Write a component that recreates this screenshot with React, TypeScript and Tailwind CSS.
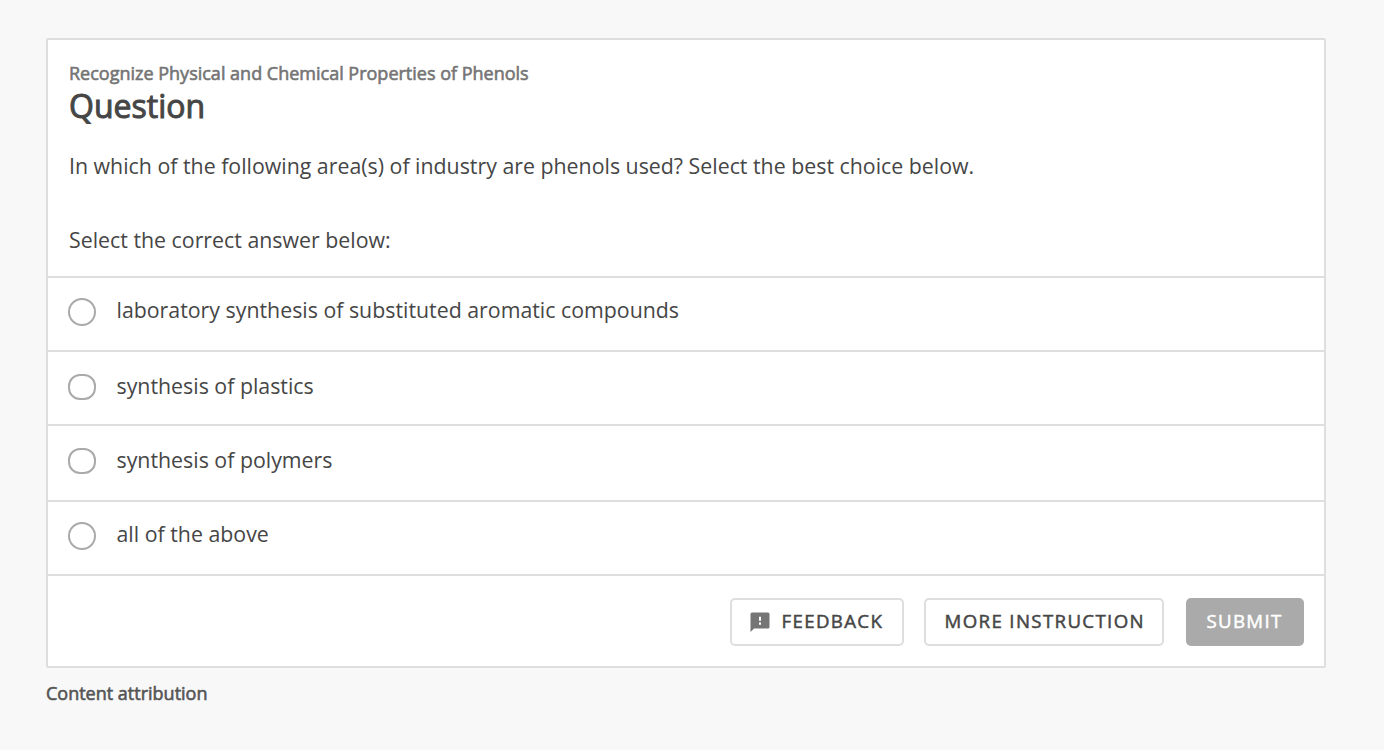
const answers = [
  { text: 'laboratory synthesis of substituted aromatic compounds', row: 'h-[74px] pt-5', dot: 'h-7 rounded-full' },
  { text: 'synthesis of plastics', row: 'h-[74px] pt-[22px]', dot: 'h-[26px] rounded-[12px]' },
  { text: 'synthesis of polymers', row: 'h-[76px] pt-[22px]', dot: 'h-[26px] rounded-[12px]' },
  { text: 'all of the above', row: 'h-[74px] pt-5', dot: 'h-7 rounded-full' },
];

export default function App() {
  return (
    <div className="min-h-screen bg-[#f8f8f8] px-[46px] pt-[38px] font-['Open_Sans',sans-serif] text-[#464646]">
      <main className="flex h-[630px] w-[1280px] flex-col rounded-[2px] border-2 border-[#dedede] bg-white">
        <header className="h-[236px] shrink-0 px-[21px] pt-5">
          <p className="h-[26px] text-[18px] leading-[26px] text-[#757575] [-webkit-text-stroke:0.6px_#757575]">Recognize Physical and Chemical Properties of Phenols</p>
          <h1 className="h-10 text-[32px] leading-10 [-webkit-text-stroke:1px_#464646]">Question</h1>
          <p className="mt-6 h-8 text-[21.33px] leading-8">In which of the following area(s) of industry are phenols used? Select the best choice below.</p>
          <p className="mt-[42px] h-8 text-[21.33px] leading-8">Select the correct answer below:</p>
        </header>
        {answers.map((a) => (
          <label key={a.text} className={`flex shrink-0 items-start border-t-2 border-[#dedede] pl-5 ${a.row}`}>
            <span className={`w-7 shrink-0 border-2 border-[#aaa] ${a.dot}`} />
            <span className="-mt-px ml-[20.5px] text-[21.33px] leading-[26px]">{a.text}</span>
          </label>
        ))}
        <footer className="flex flex-1 justify-end border-t-2 border-[#dedede] pr-5 pt-[22px]">
          <button className="flex h-12 w-[174px] items-center rounded-[5px] border-2 border-[#dedede] pl-[18px] text-[18.67px] leading-7 tracking-[1.35px] [-webkit-text-stroke:0.5px_#464646]">
            <svg width="20" height="20" viewBox="0 0 20 20" className="mr-[11.5px] shrink-0">
              <path fill="#757575" d="M2 .5h16a1.5 1.5 0 0 1 1.5 1.5v13a1.5 1.5 0 0 1-1.5 1.5H4L.5 20V2A1.5 1.5 0 0 1 2 .5Zm7 4.2v4h2v-4Zm0 5.8v2.3h2v-2.3Z" fillRule="evenodd" />
            </svg>
            <span className="-mt-0.5">FEEDBACK</span>
          </button>
          <button className="ml-5 h-12 w-60 rounded-[5px] border-2 border-[#dedede] pb-0.5 pl-[1.5px] text-[18.67px] leading-7 tracking-[1.35px] whitespace-nowrap [-webkit-text-stroke:0.5px_#464646]">MORE INSTRUCTION</button>
          <button className="ml-[22px] h-12 w-[118px] rounded-[5px] bg-[#aaa] pr-px pb-0.5 text-[18.67px] leading-7 tracking-[1.35px] text-white [-webkit-text-stroke:0.5px_#fff]">SUBMIT</button>
        </footer>
      </main>
      <p className="mt-3 text-[18px] leading-[26px] text-[#555] [-webkit-text-stroke:0.6px_#555]">Content attribution</p>
    </div>
  );
}
